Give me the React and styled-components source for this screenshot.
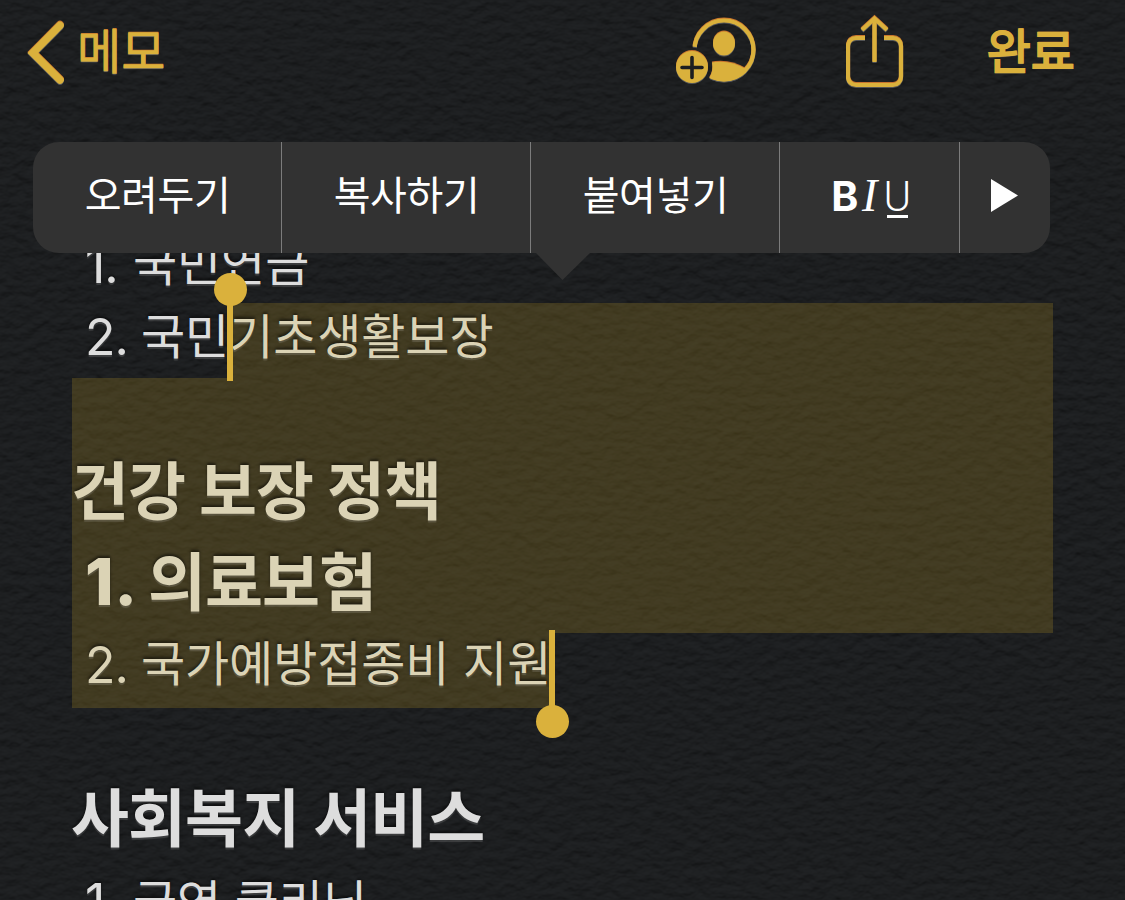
import React from "react";
import styled, { createGlobalStyle } from "styled-components";

const gold = "#dab13c";

const GlobalStyle = createGlobalStyle`
  * {
    box-sizing: border-box;
  }
  body {
    margin: 0;
    background: #1c1e20;
    overflow: hidden;
  }
`;

const Page = styled.div`
  position: relative;
  isolation: isolate;
  width: 1125px;
  height: 900px;
  overflow: hidden;
  color: #dddddd;
  font-family: "Noto Sans CJK KR", sans-serif;
`;

const Paper = styled.svg`
  position: absolute;
  inset: 0;
  z-index: -1;
`;

// --- Navigation bar ---

const NavBar = styled.header`
  display: flex;
  align-items: flex-start;
  height: 118px;
  padding: 0 50px 0 26px;
  color: ${gold};
  text-shadow: 0 -1px 0 #c8742c, 0 1px 1px rgba(255, 255, 255, 0.3);
`;

const NavButton = styled.button`
  display: flex;
  align-items: flex-start;
  gap: ${({ $gap }) => $gap || 0}px;
  padding: 0;
  border: 0;
  background: none;
  color: inherit;
  text-shadow: inherit;
  font-family: inherit;
  font-size: 48px;
  font-weight: 400;
  line-height: 96px;
  white-space: nowrap;
  -webkit-text-stroke: ${({ $bold }) => ($bold ? 1.8 : 0.5)}px ${gold};
`;

const NavActions = styled.div`
  display: flex;
  align-items: flex-start;
  margin-left: auto;
`;

const NavIcon = styled.svg`
  flex: none;
  margin-top: ${({ $top }) => $top}px;
  margin-right: ${({ $right }) => $right || 0}px;
  filter: drop-shadow(0 -1px 0 #c8742c)
    drop-shadow(0 1px 0.5px rgba(255, 255, 255, 0.25));
`;

// --- Edit menu ---

const EditMenu = styled.div`
  position: absolute;
  top: 142px;
  left: 33px;
  z-index: 2;
  display: flex;
  width: 1017px;
  height: 111px;
  border-radius: 26px;
  background: #323232;
  color: #ffffff;
`;

const MenuItem = styled.div`
  display: flex;
  align-items: center;
  justify-content: center;
  width: ${({ $width }) => $width}px;
  padding: 0 0 9px 1px;
  font-size: 40px;
  letter-spacing: -0.4px;
  white-space: nowrap;
  & + & {
    border-left: 1px solid #7c7c7c;
  }
`;

const IconItem = styled(MenuItem)`
  padding: 0 1px 4px 0;
`;

const MenuArrow = styled.svg`
  position: absolute;
  top: 110px;
  left: 502px;
`;

const Formats = styled.div`
  display: flex;
  align-items: baseline;
  padding-left: 1px;
`;

const Bold = styled.span`
  font: 700 41px/1 Inter, sans-serif;
`;

const Italic = styled.span`
  margin: 0 10px 0 4px;
  font: italic 400 46px/1 "Liberation Serif", serif;
`;

const Underline = styled.span`
  display: flex;
  justify-content: center;
  width: 21px;
  border-bottom: 3px solid #ffffff;
  font: 300 42px/36px Roboto, sans-serif;
  letter-spacing: 0;
`;

// --- Note body ---

const Note = styled.main`
  padding: 110px 72px 0;
`;

// $leading sets the text's vertical place, the row height stays fixed
const Line = styled.div`
  display: flex;
  height: ${({ $heading }) => ($heading ? 90 : 75)}px;
  font-size: ${({ $heading }) => ($heading ? 63 : 48)}px;
  font-weight: ${({ $heading }) => ($heading ? 700 : 400)};
  line-height: ${({ $leading }) => $leading || 60}px;
  letter-spacing: ${({ $heading }) => ($heading ? -0.9 : -0.1)}px;
  word-spacing: ${({ $heading }) => ($heading ? 0.5 : 3)}px;
  text-indent: ${({ $heading }) => ($heading ? -1 : 0)}px;
  white-space: pre;
  text-shadow: 0 -2px 3px rgba(0, 0, 0, 0.55),
    0 2px 1px rgba(255, 255, 255, 0.15);
`;

const Selected = styled.span`
  position: relative;
  display: flex;
  flex: ${({ $fill }) => ($fill ? 1 : "none")};
  background: rgba(217, 176, 40, 0.2);
  color: #dbd3b5;
`;

const Marker = styled.span`
  width: ${({ $width }) => $width}px;
  padding-left: 13px;
  font-family: Inter, sans-serif;
  font-size: 50px;
  line-height: ${({ $leading }) => $leading}px;
  letter-spacing: -1px;
`;

const HeadingMarker = styled(Marker)`
  padding-left: 14px;
  font-size: 65px;
  font-weight: 800;
  letter-spacing: 0.5px;
`;

const Handle = styled.i`
  position: absolute;
  top: -3px;
  ${({ $end }) => ($end ? "right: -4px;" : "left: -2px;")}
  z-index: 1;
  width: 6px;
  height: ${({ $end }) => ($end ? 80 : 81)}px;
  background: ${gold};
  &::after {
    content: "";
    position: absolute;
    left: -13px;
    ${({ $end }) => ($end ? "top: 75px;" : "top: -27px;")}
    width: 33px;
    height: 33px;
    border-radius: 50%;
    background: ${gold};
  }
`;

const PaperTexture = () => (
  <Paper width="1125" height="900">
    <filter id="grain" x="0" y="0" width="100%" height="100%" colorInterpolationFilters="sRGB">
      <feTurbulence type="fractalNoise" baseFrequency="0.075 0.11" numOctaves="3" seed="8" result="noise" />
      <feDiffuseLighting in="noise" surfaceScale="1.5" diffuseConstant="1" lightingColor="#212325">
        <feDistantLight azimuth="265" elevation="60" />
      </feDiffuseLighting>
    </filter>
    <rect width="1125" height="900" filter="url(#grain)" />
  </Paper>
);

const BackIcon = () => (
  <NavIcon $top={18} width="40" height="70" viewBox="26 18 40 70">
    <path d="M60 25.500 32.800 53l27.200 27" fill="none" stroke={gold} strokeWidth="7.600" strokeLinecap="round" />
  </NavIcon>
);

const AddPersonIcon = () => (
  <NavIcon $top={15} $right={88} width="84" height="74" viewBox="674 14 84 74">
    <mask id="badge">
      <rect x="674" y="14" width="84" height="74" fill="#fff" />
      <circle cx="692" cy="66" r="20.500" fill="#000" />
    </mask>
    <clipPath id="round">
      <circle cx="724" cy="49" r="31.500" />
    </clipPath>
    <g mask="url(#badge)">
      <circle cx="724" cy="49" r="29.500" fill="none" stroke={gold} strokeWidth="4.200" />
      <ellipse cx="724" cy="42.500" rx="11" ry="12" fill={gold} />
      <path d="M700 65Q724 55 746 68V86H700Z" fill={gold} clipPath="url(#round)" />
    </g>
    <circle cx="692" cy="66" r="16" fill={gold} />
    <path d="M692 56.500v20M682 66.500h20" stroke="#1c1e20" strokeWidth="3.600" strokeLinecap="round" />
  </NavIcon>
);

const ShareIcon = () => (
  <NavIcon $top={12} $right={83} width="58" height="78" viewBox="846 12 58 78">
    <g fill="none" stroke={gold} strokeWidth="4.200">
      <path d="M865 38h-9a8 8 0 0 0-8 8v31a8 8 0 0 0 8 8h37a8 8 0 0 0 8-8V46a8 8 0 0 0-8-8h-9" />
      <path d="M874.500 19v43" />
      <path d="m862 30 12.500-11.500L887 30" />
    </g>
  </NavIcon>
);

const App = () => {
  return (
    <Page>
      <GlobalStyle />
      <PaperTexture />
      <NavBar>
        <NavButton $gap={11}>
          <BackIcon />
          메모
        </NavButton>
        <NavActions>
          <AddPersonIcon />
          <ShareIcon />
          <NavButton $bold>완료</NavButton>
        </NavActions>
      </NavBar>

      <EditMenu>
        <MenuItem $width={248}>오려두기</MenuItem>
        <MenuItem $width={249}>복사하기</MenuItem>
        <MenuItem $width={249}>붙여넣기</MenuItem>
        <IconItem $width={180}>
          <Formats>
            <Bold>B</Bold>
            <Italic>I</Italic>
            <Underline>U</Underline>
          </Formats>
        </IconItem>
        <IconItem $width={91}>
          <svg width="27" height="33" viewBox="0 0 27 33">
            <path d="M0 0 27 16.500 0 33Z" fill="#fff" />
          </svg>
        </IconItem>
        <MenuArrow width="56" height="28" viewBox="0 0 56 28">
          <path d="M0 0H56L27.500 28Z" fill="#323232" />
        </MenuArrow>
      </EditMenu>

      <Note>
        <Line $leading={65}>
          <Marker $width={61} $leading={74}>1.</Marker>국민연금
        </Line>
        <Line $leading={60}>
          <Marker $width={69} $leading={69}>2.</Marker>국민
          <Selected $fill>
            <Handle />
            기초생활보장
          </Selected>
        </Line>
        <Line>
          <Selected $fill />
        </Line>
        <Line $heading $leading={68}>
          <Selected $fill>건강 보장 정책</Selected>
        </Line>
        <Line $heading $leading={69}>
          <Selected $fill>
            <HeadingMarker $width={77} $leading={77}>1.</HeadingMarker>의료보험
          </Selected>
        </Line>
        <Line $leading={55}>
          <Selected>
            <Marker $width={69} $leading={65}>2.</Marker>국가예방접종비 지원
            <Handle $end />
          </Selected>
        </Line>
        <Line />
        <Line $heading $leading={62}>사회복지 서비스</Line>
        <Line $leading={52}>
          <Marker $width={61} $leading={58}>1.</Marker>국영 클리닉
        </Line>
      </Note>
    </Page>
  );
};

export default App;
